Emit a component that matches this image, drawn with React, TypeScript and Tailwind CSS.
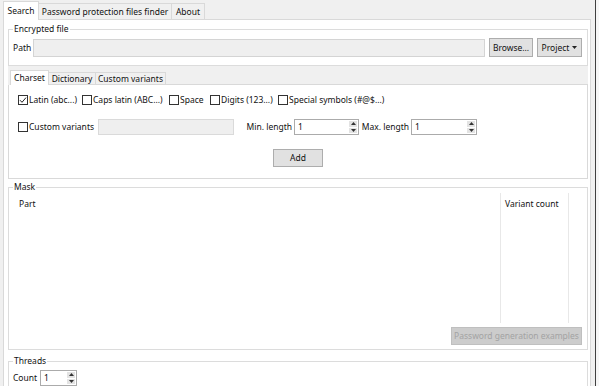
import React from "react";

function Check({ checked }: { checked?: boolean }) {
  return (
    <span className="w-[10px] h-[10px] border border-[#333333] bg-white flex items-center justify-center shrink-0">
      {checked && (
        <svg width="8" height="8" viewBox="0 0 8 8">
          <path d="M1 4.2 L3 6.3 L7 1.6" fill="none" stroke="#222222" strokeWidth="1" />
        </svg>
      )}
    </span>
  );
}

function Spin({ cls }: { cls: string }) {
  return (
    <div className={`flex h-[16px] border border-[#ababab] bg-white shrink-0 ${cls}`}>
      <div className="flex-1 pl-[3px] leading-[14px]">1</div>
      <div className="w-[10px] flex flex-col gap-[1px] p-[1px]">
        <div className="flex-1 bg-[#e3e3e3] flex items-center justify-center">
          <svg width="5" height="3" viewBox="0 0 5 3">
            <path d="M0 3 L2.5 0 L5 3Z" fill="#333333" />
          </svg>
        </div>
        <div className="flex-1 bg-[#e3e3e3] flex items-center justify-center">
          <svg width="5" height="3" viewBox="0 0 5 3">
            <path d="M0 0 L2.5 3 L5 0Z" fill="#333333" />
          </svg>
        </div>
      </div>
    </div>
  );
}

export default function App() {
  return (
    <div className="w-[599px] h-[386px] bg-[#f0f0f0] flex overflow-hidden font-['Noto_Sans',sans-serif] text-[8.5px] leading-[12px] text-[#111111]">
      <div className="w-[591px] pl-[3px] flex flex-col">
        {/* tab row */}
        <div className="h-[20px] flex items-end shrink-0">
          <div className="w-[36px] h-[19px] bg-white border-x border-t border-[#d9d9d9] flex items-center justify-center">
            Search
          </div>
          <div className="w-[133px] h-[17px] bg-[#f0f0f0] border-r border-y border-[#d9d9d9] flex items-center justify-center">
            Password protection files finder
          </div>
          <div className="w-[33px] h-[17px] bg-[#f0f0f0] border-r border-y border-[#d9d9d9] flex items-center justify-center">
            About
          </div>
          <div className="flex-1 border-b border-[#d9d9d9]" />
        </div>
        {/* panel */}
        <div className="flex-1 bg-white border-x border-[#d9d9d9] pl-[4px] pr-[2px] flex flex-col overflow-hidden">
          {/* Encrypted file */}
          <fieldset className="mt-[3px] border border-[#dcdcdc] pl-[4px] pr-[5px] pb-[8px]">
            <legend className="px-[1px] leading-[12px]">Encrypted file</legend>
            <div className="mt-[3px] flex items-center h-[19px]">
              <span className="w-[20px]">Path</span>
              <div className="flex-1 h-[18px] bg-[#efefef] border border-[#d4d4d4]" />
              <div className="ml-[4px] w-[44px] h-[19px] bg-[#e1e1e1] border border-[#adadad] flex items-center justify-center">
                Browse...
              </div>
              <div className="ml-[4px] w-[45px] h-[19px] bg-[#e1e1e1] border border-[#adadad] flex items-center justify-center gap-[3px]">
                <span>Project</span>
                <svg width="5" height="3" viewBox="0 0 5 3">
                  <path d="M0 0 L2.5 3 L5 0Z" fill="#222222" />
                </svg>
              </div>
            </div>
          </fieldset>

          {/* inner tab control */}
          <div className="h-[19px] bg-[#f0f0f0] flex items-end pl-[2px] shrink-0">
            <div className="w-[39px] h-[15px] bg-white border-x border-t border-[#d9d9d9] flex items-center justify-center">
              Charset
            </div>
            <div className="w-[47px] h-[13px] border-r border-y border-[#d9d9d9] flex items-center justify-center">
              Dictionary
            </div>
            <div className="w-[70px] h-[13px] border-r border-y border-[#d9d9d9] flex items-center justify-center">
              Custom variants
            </div>
            <div className="flex-1 border-b border-[#d9d9d9]" />
          </div>
          <div className="border-x border-b border-[#d9d9d9] bg-white pt-[8px] pb-[11px] pl-[9px] flex flex-col shrink-0">
            <div className="h-[14px] flex items-center">
              <div className="w-[64px] flex items-center gap-[1px]">
                <Check checked />
                <span>Latin (abc...)</span>
              </div>
              <div className="w-[87px] flex items-center gap-[1px]">
                <Check />
                <span>Caps latin (ABC...)</span>
              </div>
              <div className="w-[41px] flex items-center gap-[1px]">
                <Check />
                <span>Space</span>
              </div>
              <div className="w-[68px] flex items-center gap-[1px]">
                <Check />
                <span>Digits (123...)</span>
              </div>
              <div className="flex items-center gap-[1px]">
                <Check />
                <span>Special symbols (#@$...)</span>
              </div>
            </div>
            <div className="mt-[12px] h-[16px] flex items-center">
              <div className="w-[80px] flex items-center gap-[1px]">
                <Check />
                <span>Custom variants</span>
              </div>
              <div className="w-[136px] h-[16px] bg-[#efefef] border border-[#dadada]" />
              <div className="w-[60px] text-right pr-[2px]">Min. length</div>
              <Spin cls="w-[65px]" />
              <div className="w-[52px] text-right pr-[2px]">Max. length</div>
              <Spin cls="w-[66px]" />
            </div>
            <div className="mt-[14px] flex justify-center pr-[9px]">
              <div className="w-[50px] h-[18px] bg-[#e1e1e1] border border-[#adadad] flex items-center justify-center">
                Add
              </div>
            </div>
          </div>

          {/* Mask */}
          <fieldset className="mt-[2px] border border-[#dcdcdc] pl-[4px] pr-[5px] pb-[4px] shrink-0">
            <legend className="px-[1px] leading-[12px]">Mask</legend>
            <div className="h-[130px] flex">
              <div className="w-[488px] border-r border-[#e8e8e8] pl-[6px] pt-[5px]">Part</div>
              <div className="w-[68px] border-r border-[#e8e8e8] pl-[4px] pt-[5px]">Variant count</div>
              <div className="flex-1" />
            </div>
            <div className="mt-[4px] flex justify-end">
              <div className="w-[131px] h-[18px] bg-[#cccccc] border border-[#bfbfbf] text-[#a3a3a3] flex items-center justify-center">
                Password generation examples
              </div>
            </div>
          </fieldset>

          {/* Threads */}
          <fieldset className="mt-[5px] border border-[#dcdcdc] pl-[4px] pr-[5px] pb-[8px] shrink-0">
            <legend className="px-[1px] leading-[12px]">Threads</legend>
            <div className="mt-[3px] flex items-center h-[16px]">
              <span className="w-[27px]">Count</span>
              <Spin cls="w-[37px]" />
            </div>
          </fieldset>
        </div>
      </div>
      <div className="w-[4px] bg-[#f0f0f0]" />
      <div className="w-[1px] bg-[#404040]" />
      <div className="flex-1 bg-[#f6f6f6]" />
    </div>
  );
}
